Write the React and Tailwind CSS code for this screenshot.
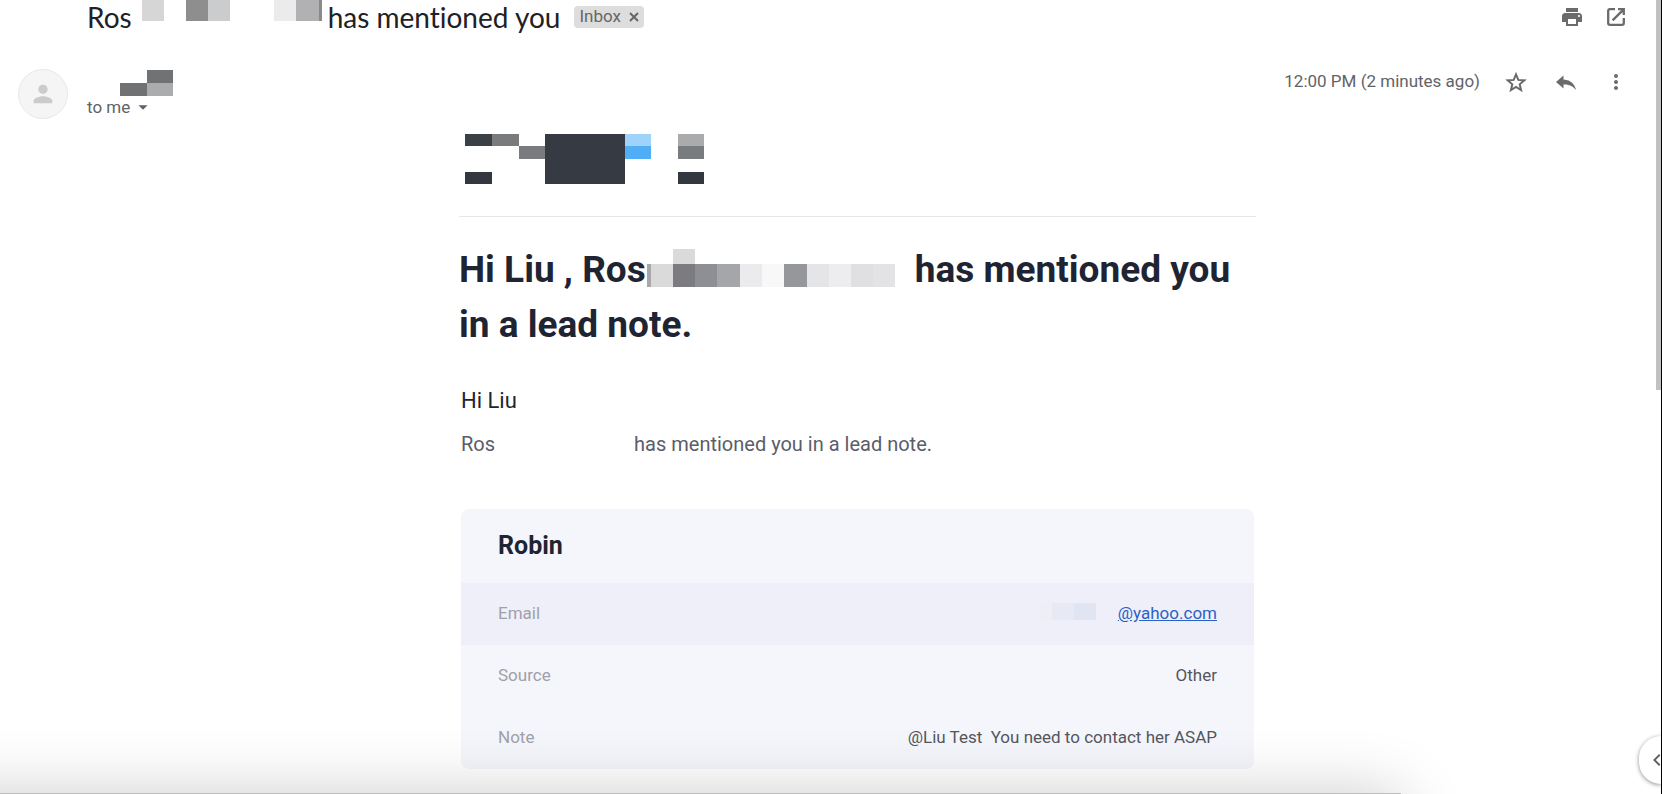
import React from "react";
import { MdPrint, MdMoreVert, MdPerson, MdArrowDropDown, MdChevronLeft } from "react-icons/md";

// Blocks that hide the private names, each one [x, y, width, height, color]
const subjectBlocks = [
  [0, 0, 22, 21, "#d6d6d6"],
  [44, 0, 22, 21, "#8e8e8e"],
  [66, 0, 22, 21, "#cbccce"],
  [132, 0, 22, 21, "#ebebeb"],
  [154, 0, 24, 21, "#b1b1b3"],
  [177, 0, 3, 21, "#8a8a8b"],
];

const senderBlocks = [
  [27, 0, 26, 13, "#717273"],
  [0, 13, 27, 13, "#6f7172"],
  [27, 13, 26, 13, "#abacae"],
];

const logoBlocks = [
  [0, 0, 27, 12, "#394046"],
  [27, 0, 27, 12, "#797b7c"],
  [54, 12, 26, 13, "#797b7e"],
  [80, 0, 80, 50, "#363a42"],
  [160, 0, 26, 12, "#a0d3fa"],
  [160, 12, 26, 13, "#4faef5"],
  [213, 0, 26, 12, "#a9abad"],
  [213, 12, 26, 13, "#797c7e"],
  [0, 38, 27, 12, "#33373f"],
  [213, 38, 26, 12, "#33373f"],
];

const titleBlocks = [
  [0, 15, 4, 23, "#a8a8ab"],
  [4, 15, 22, 23, "#dadadb"],
  [26, 0, 22, 15, "#dadadb"],
  [26, 15, 22, 23, "#7b7b80"],
  [48, 15, 22, 23, "#8e8f94"],
  [70, 15, 23, 23, "#a5a6a9"],
  [93, 15, 22, 23, "#ebebed"],
  [115, 15, 22, 23, "#f8f8f9"],
  [137, 15, 23, 23, "#96979b"],
  [160, 15, 22, 23, "#e5e5e8"],
  [182, 15, 22, 23, "#ededef"],
  [204, 15, 22, 23, "#e0e0e2"],
  [226, 15, 22, 23, "#e3e3e5"],
];

const emailBlocks = [
  [0, 0, 11, 17, "#eeeef7"],
  [11, 0, 22, 17, "#e7e9f5"],
  [33, 0, 22, 17, "#e1e5f3"],
];

function Blocks({ blocks, width, height, className }) {
  return (
    <svg width={width} height={height} className={className} shapeRendering="crispEdges" aria-hidden="true">
      {blocks.map(([x, y, w, h, fill], i) => (
        <rect key={i} x={x} y={y} width={w} height={h} fill={fill} />
      ))}
    </svg>
  );
}

function CloseIcon() {
  return (
    <svg viewBox="0 0 10 10" className="size-2.5" fill="none" stroke="currentColor" strokeWidth="2">
      <path d="M1 1l8 8M9 1l-8 8" />
    </svg>
  );
}

function OpenIcon() {
  return (
    <svg viewBox="0 0 24 24" className="size-6" fill="none" stroke="currentColor" strokeWidth="2.3">
      <path d="M11 4.2H6A1.8 1.8 0 0 0 4.2 6v12A1.8 1.8 0 0 0 6 19.8h12a1.8 1.8 0 0 0 1.8-1.8v-5" />
      <path d="M14 4.2h5.8V10M19.4 4.6L8.6 15.4" />
    </svg>
  );
}

function StarIcon() {
  return (
    <svg viewBox="0 0 24 24" className="size-6" fill="none" stroke="currentColor" strokeWidth="2">
      <path d="M12 4.4l2.3 5.5 6 .5-4.6 3.9 1.4 5.8-5.1-3.1-5.1 3.1 1.4-5.8-4.6-3.9 6-.5z" />
    </svg>
  );
}

function ReplyIcon() {
  return (
    <svg viewBox="0 0 24 24" className="size-6" fill="currentColor">
      <path d="M9.5 9.4V5.6L2 12l7.5 6.4v-4c5.2-.1 9.4 1.2 12.5 5.6-1.2-5.6-4.4-10-12.5-10.6z" />
    </svg>
  );
}

function Subject() {
  return (
    <header className="flex h-[34px] items-center justify-between pl-[87px] pr-7">
      <div className="flex items-center">
        <h1 className="flex items-center font-['Lato',sans-serif] text-[28px] leading-[34px] text-[#202124] [font-variant-ligatures:none]">
          Ros
          <Blocks blocks={subjectBlocks} width={180} height={21} className="ml-2.5 mr-1.5 self-start" />
          has mentioned you
        </h1>
        <span className="ml-3.5 flex h-[22px] items-center gap-2 rounded bg-[#dddddd] px-[5px] text-[17px] text-[#666666]">
          Inbox
          <button aria-label="Remove label">
            <CloseIcon />
          </button>
        </span>
      </div>
      <div className="flex items-center gap-5 text-[#6b6b6b]">
        <button aria-label="Print all">
          <MdPrint className="size-6" />
        </button>
        <button aria-label="Open in new window">
          <OpenIcon />
        </button>
      </div>
    </header>
  );
}

function Sender() {
  return (
    <div className="flex items-start justify-between pb-px pl-[18px] pr-7 pt-[35px]">
      <div className="flex">
        <div className="flex size-[50px] items-center justify-center rounded-full border border-[#e8e8e8] bg-[#f5f5f5] text-[#cbcbcb]">
          <MdPerson className="size-7" />
        </div>
        <div className="ml-[19px]">
          <Blocks blocks={senderBlocks} width={53} height={26} className="ml-[33px] mt-px block" />
          <button className="flex items-center text-[17px] leading-[22px] text-[#5f6368]">
            to me
            <MdArrowDropDown className="ml-0.5 size-[22px]" />
          </button>
        </div>
      </div>
      <div className="flex items-center text-[#6b6b6b]">
        <span className="mr-6 text-[17px] text-[#5f6368]">12:00 PM (2 minutes ago)</span>
        <div className="flex gap-[26px]">
          <button aria-label="Star">
            <StarIcon />
          </button>
          <button aria-label="Reply">
            <ReplyIcon />
          </button>
          <button aria-label="More">
            <MdMoreVert className="size-6" />
          </button>
        </div>
      </div>
    </div>
  );
}

function LeadCard() {
  return (
    <div className="mx-0.5 mt-[49px] overflow-hidden rounded-lg bg-[#f5f6fb]">
      <h3 className="px-[37px] pb-[21px] pt-[21px] text-[25px] font-bold leading-8 text-[#1f2433]">Robin</h3>
      <table className="w-full text-[17px] text-[#54565e]">
        <tbody>
          <tr className="h-[62px] bg-[#efeff9]">
            <th scope="row" className="px-[37px] text-left font-normal text-[#9fa0a8]">Email</th>
            <td className="px-[37px]">
              <div className="flex items-center justify-end">
                <Blocks blocks={emailBlocks} width={55} height={17} className="mb-1.5 mr-[22px]" />
                <a href="mailto:@yahoo.com" className="text-[#2a61c8] underline">@yahoo.com</a>
              </div>
            </td>
          </tr>
          <tr className="h-[62px]">
            <th scope="row" className="px-[37px] text-left font-normal text-[#9fa0a8]">Source</th>
            <td className="px-[37px] text-right">Other</td>
          </tr>
          <tr className="h-[62px]">
            <th scope="row" className="px-[37px] text-left font-normal text-[#9fa0a8]">Note</th>
            <td className="whitespace-pre px-[37px] text-right">@Liu Test  You need to contact her ASAP</td>
          </tr>
        </tbody>
      </table>
    </div>
  );
}

function App() {
  return (
    <div className="relative flex h-screen overflow-hidden bg-white font-['Roboto',sans-serif]">
      <main className="min-w-0 flex-1">
        <Subject />
        <Sender />
        <div className="pl-[87px] pr-7 pt-3.5">
          <article className="mx-auto max-w-[797px]">
            <Blocks blocks={logoBlocks} width={239} height={50} className="ml-1.5 block" />
            <hr className="mt-8 border-[#e6e6e8]" />
            <h2 className="mt-[25px] text-[37px] font-bold leading-[55px] text-[#1f2433]">
              <span className="flex items-center whitespace-nowrap">
                Hi Liu , Ros
                <Blocks blocks={titleBlocks} width={248} height={38} className="mb-1 ml-px mr-5 shrink-0" />
                has mentioned you
              </span>
              <span className="block">in a lead note.</span>
            </h2>
            <p className="mt-[33px] pl-0.5 text-[22px] leading-8 text-[#1f2433]">Hi Liu</p>
            <p className="mt-[11px] flex gap-[139px] pl-0.5 text-xl leading-8 text-[#5b5d68]">
              <span>Ros</span>
              <span>has mentioned you in a lead note.</span>
            </p>
            <LeadCard />
          </article>
        </div>
      </main>

      {/* Scrollbar */}
      <div className="w-[5px] bg-white">
        <div className="h-[390px] bg-[#c1c1c1]" />
      </div>
      <div className="w-px bg-black" />

      {/* Shadow of the bar under the message */}
      <div className="absolute -bottom-[199px] -left-20 right-[261px] h-[200px] bg-[#bdbdbd] shadow-[0_0_60px_rgba(0,0,0,0.2)]" />

      <button
        aria-label="Show side panel"
        className="absolute bottom-2.5 right-px flex h-12 w-[22px] items-center justify-end overflow-hidden rounded-l-full bg-white text-[#5f6368] shadow-[0_1px_4px_rgba(0,0,0,0.45)]"
      >
        <MdChevronLeft className="-mr-2 size-6 shrink-0" />
      </button>
    </div>
  );
}

export default App;
